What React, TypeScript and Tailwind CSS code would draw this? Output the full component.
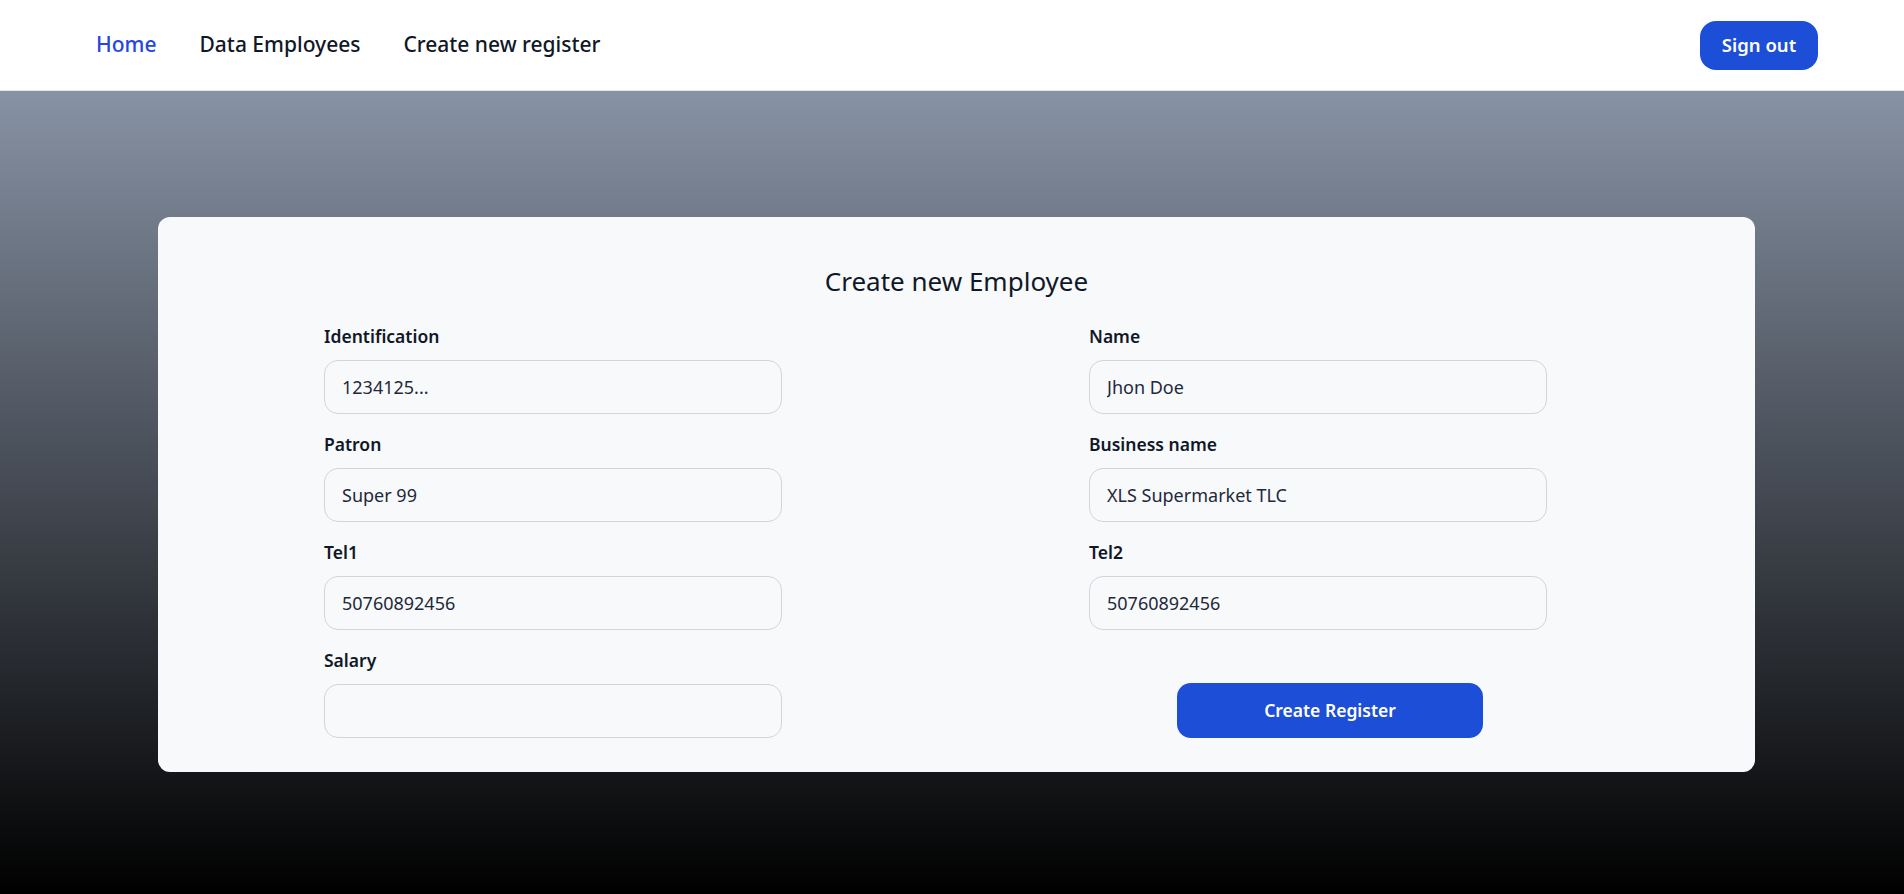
import { useState } from "react";

type Field = {
  id: string;
  label: string;
  placeholder?: string;
  value?: string;
};

const leftFields: Field[] = [
  { id: "identification", label: "Identification", placeholder: "1234125..." },
  { id: "patron", label: "Patron", value: "Super 99" },
  { id: "tel1", label: "Tel1", value: "50760892456" },
  { id: "salary", label: "Salary", value: "" },
];

const rightFields: Field[] = [
  { id: "name", label: "Name", value: "Jhon Doe" },
  { id: "business", label: "Business name", value: "XLS Supermarket TLC" },
  { id: "tel2", label: "Tel2", value: "50760892456" },
];

function FormField({ field }: { field: Field }) {
  const [value, setValue] = useState(field.value ?? "");

  return (
    <div className="flex flex-col gap-3">
      <label
        htmlFor={field.id}
        className="text-[17.5px] leading-6 font-semibold text-gray-900"
      >
        {field.label}
      </label>
      <input
        id={field.id}
        value={value}
        placeholder={field.placeholder}
        onChange={(e) => setValue(e.target.value)}
        className="h-[54px] w-[458px] rounded-[14px] border border-gray-300 bg-[#f8f9fb] px-[17px] text-[18px] text-gray-800 placeholder:text-gray-800 outline-none"
      />
    </div>
  );
}

export default function App() {
  return (
    <div
      className="flex min-h-screen flex-col"
      style={{ fontFamily: '"Noto Sans", "Open Sans", sans-serif' }}
    >
      {/* Navbar */}
      <header className="flex h-[91px] items-center justify-between border-b border-gray-200 bg-white pl-[96px] pr-[86px]">
        <nav className="flex items-center gap-[43px] text-[21px] font-medium">
          <a href="#" className="text-[#2546e0]">
            Home
          </a>
          <a href="#" className="text-gray-900">
            Data Employees
          </a>
          <a href="#" className="text-gray-900">
            Create new register
          </a>
        </nav>
        <button className="h-[49px] w-[118px] rounded-2xl bg-[#1d4ed8] text-[18.5px] font-semibold text-white">
          Sign out
        </button>
      </header>

      {/* Main */}
      <main className="flex flex-1 items-center bg-[linear-gradient(to_bottom,#8792a4,#000000)] pt-[4px]">
        <section className="ml-[158px] w-[1597px] rounded-xl bg-[#f8f9fb] pt-[47px] pb-[34px]">
          <h1 className="text-center text-[26px] leading-[34px] font-normal text-gray-900">
            Create new Employee
          </h1>

          <div className="mt-[26px] grid grid-cols-[458px_458px] gap-x-[307px] pl-[166px]">
            <div className="flex flex-col gap-[18px]">
              {leftFields.map((f) => (
                <FormField key={f.id} field={f} />
              ))}
            </div>

            <div className="flex flex-col gap-[18px]">
              {rightFields.map((f) => (
                <FormField key={f.id} field={f} />
              ))}
              <div className="flex flex-1 items-end">
                <button className="ml-[88px] h-[55px] w-[306px] rounded-[14px] bg-[#1d4ed8] text-[17.5px] font-semibold text-white">
                  Create Register
                </button>
              </div>
            </div>
          </div>
        </section>
      </main>
    </div>
  );
}
